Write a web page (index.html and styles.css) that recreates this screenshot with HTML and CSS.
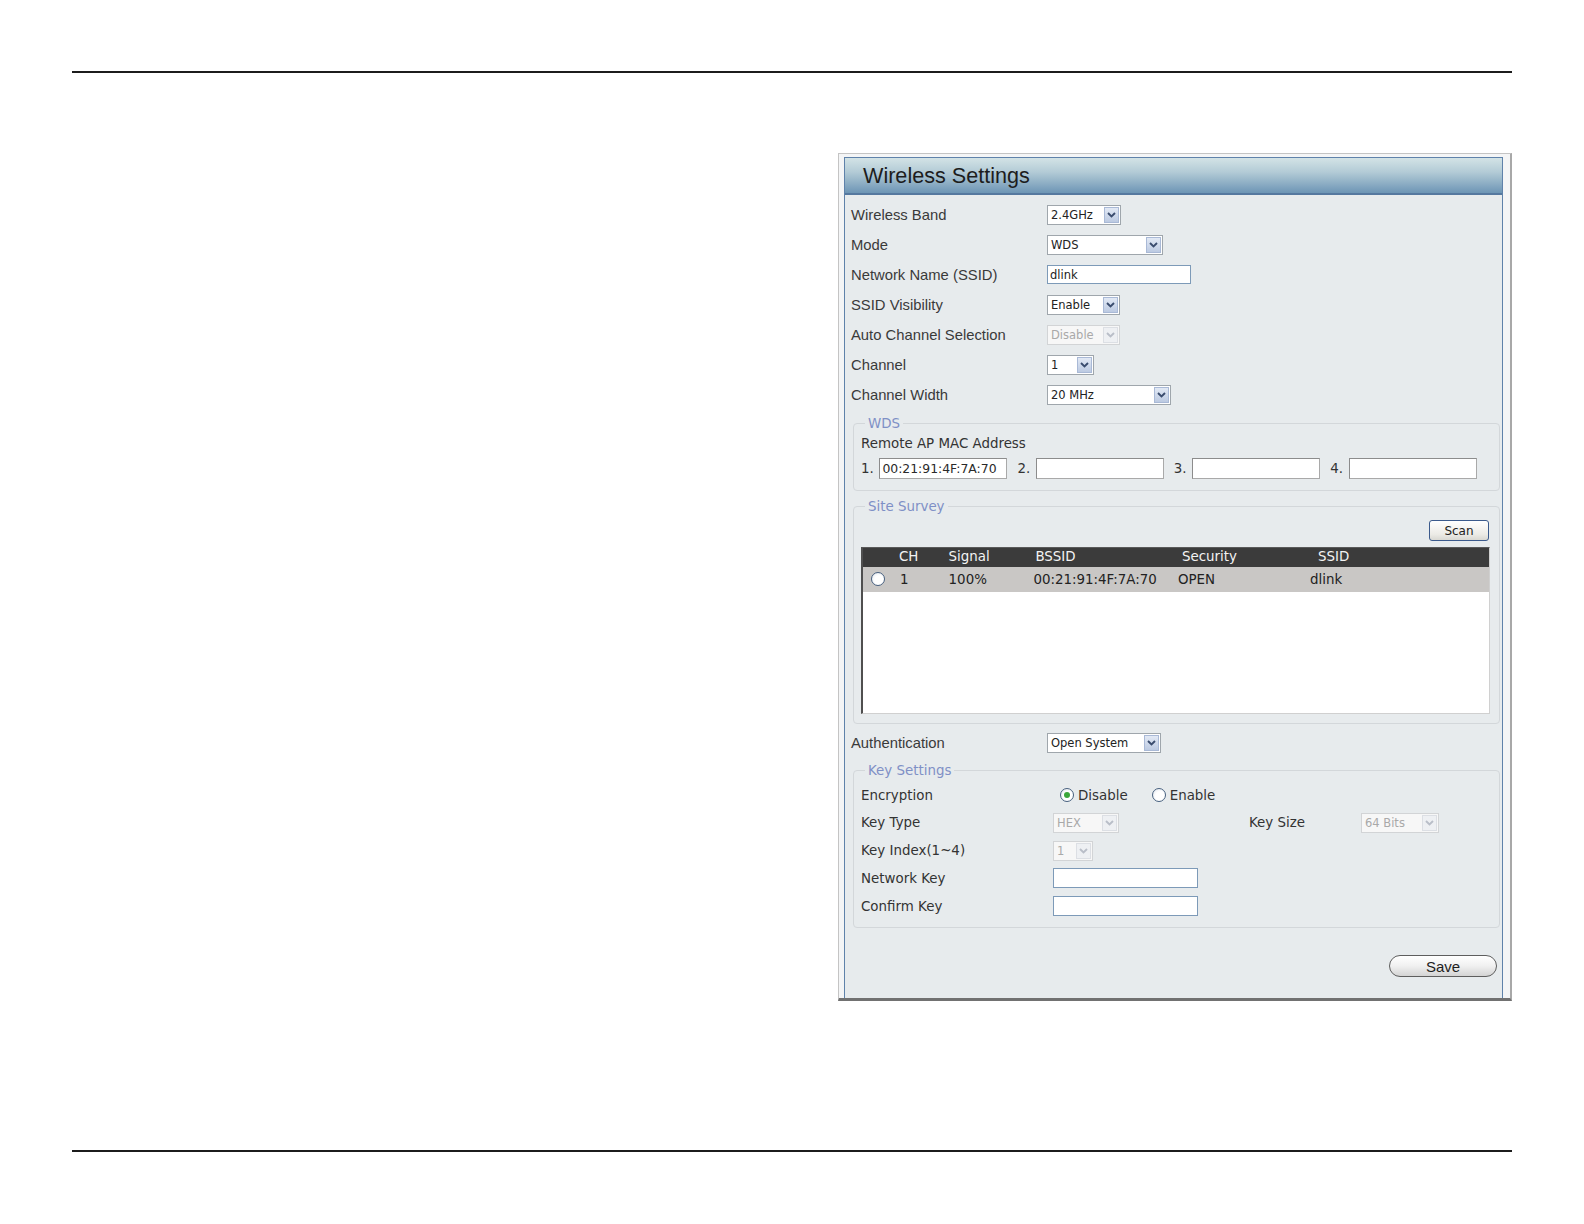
FILE: index.html
```html
<!DOCTYPE html>
<html lang="en">
<head>
<meta charset="utf-8">
<title>Wireless Settings</title>
<link rel="stylesheet" href="styles.css">
</head>
<body>
<div class="page">
  <div class="rule"></div>
  <div class="content">
    <div class="frame">
      <div class="panel">
        <div class="panel-head">Wireless Settings</div>
        <div class="panel-body">
          <div class="row"><div class="lbl">Wireless Band</div>
            <div class="sel w-band"><span class="sel-val">2.4GHz</span><span class="sel-btn"><svg viewBox="0 0 9 6"><path d="M1 1l3.5 3.5L8 1"/></svg></span></div></div>
          <div class="row"><div class="lbl">Mode</div>
            <div class="sel w-mode"><span class="sel-val">WDS</span><span class="sel-btn"><svg viewBox="0 0 9 6"><path d="M1 1l3.5 3.5L8 1"/></svg></span></div></div>
          <div class="row"><div class="lbl">Network Name (SSID)</div>
            <div class="txt w-ssid">dlink</div></div>
          <div class="row"><div class="lbl">SSID Visibility</div>
            <div class="sel w-vis"><span class="sel-val">Enable</span><span class="sel-btn"><svg viewBox="0 0 9 6"><path d="M1 1l3.5 3.5L8 1"/></svg></span></div></div>
          <div class="row"><div class="lbl">Auto Channel Selection</div>
            <div class="sel w-vis is-off"><span class="sel-val">Disable</span><span class="sel-btn"><svg viewBox="0 0 9 6"><path d="M1 1l3.5 3.5L8 1"/></svg></span></div></div>
          <div class="row"><div class="lbl">Channel</div>
            <div class="sel w-ch"><span class="sel-val">1</span><span class="sel-btn"><svg viewBox="0 0 9 6"><path d="M1 1l3.5 3.5L8 1"/></svg></span></div></div>
          <div class="row"><div class="lbl">Channel Width</div>
            <div class="sel w-cw"><span class="sel-val">20 MHz</span><span class="sel-btn"><svg viewBox="0 0 9 6"><path d="M1 1l3.5 3.5L8 1"/></svg></span></div></div>

          <fieldset class="fs fs-wds">
            <legend>WDS</legend>
            <div class="remote">Remote AP MAC Address</div>
            <div class="macs">
              <span class="mac-n">1.</span><div class="mac">00:21:91:4F:7A:70</div>
              <span class="mac-n">2.</span><div class="mac"></div>
              <span class="mac-n">3.</span><div class="mac"></div>
              <span class="mac-n">4.</span><div class="mac"></div>
            </div>
          </fieldset>

          <fieldset class="fs fs-survey">
            <legend>Site Survey</legend>
            <div class="scan-bar"><button class="scan" type="button">Scan</button></div>
            <div class="survey">
              <div class="sv-head">
                <span></span><span>CH</span><span>Signal</span><span class="th-b">BSSID</span><span class="th-s">Security</span><span class="th-i">SSID</span>
              </div>
              <div class="sv-row">
                <span class="sv-radio"><span class="radio"></span></span><span>1</span><span>100%</span><span>00:21:91:4F:7A:70</span><span>OPEN</span><span>dlink</span>
              </div>
            </div>
          </fieldset>

          <div class="row row-auth"><div class="lbl">Authentication</div>
            <div class="sel w-auth"><span class="sel-val">Open System</span><span class="sel-btn"><svg viewBox="0 0 9 6"><path d="M1 1l3.5 3.5L8 1"/></svg></span></div></div>

          <fieldset class="fs fs-key">
            <legend>Key Settings</legend>
            <div class="krow"><div class="klbl">Encryption</div>
              <span class="radio on r-dis"></span><span class="rtxt">Disable</span>
              <span class="radio r-en"></span><span class="rtxt">Enable</span>
            </div>
            <div class="krow"><div class="klbl">Key Type</div>
              <div class="sel w-kt is-off"><span class="sel-val">HEX</span><span class="sel-btn"><svg viewBox="0 0 9 6"><path d="M1 1l3.5 3.5L8 1"/></svg></span></div>
              <div class="ks-lbl">Key Size</div>
              <div class="sel w-ks is-off"><span class="sel-val">64 Bits</span><span class="sel-btn"><svg viewBox="0 0 9 6"><path d="M1 1l3.5 3.5L8 1"/></svg></span></div>
            </div>
            <div class="krow"><div class="klbl">Key Index(1~4)</div>
              <div class="sel w-ki is-off"><span class="sel-val">1</span><span class="sel-btn"><svg viewBox="0 0 9 6"><path d="M1 1l3.5 3.5L8 1"/></svg></span></div>
            </div>
            <div class="krow"><div class="klbl">Network Key</div><div class="txt w-key"></div></div>
            <div class="krow"><div class="klbl">Confirm Key</div><div class="txt w-key"></div></div>
          </fieldset>

          <div class="actions"><button class="save" type="button">Save</button></div>
        </div>
      </div>
    </div>
  </div>
  <div class="rule rule-bottom"></div>
</div>
</body>
</html>
```

FILE: styles.css
```css
html, body {
  margin: 0;
  padding: 0;
  background: #ffffff;
}

.page {
  width: 1440px;
  padding: 71px 72px 0 72px;
}

.rule {
  border-top: 2px solid #1c1c1c;
}

.rule-bottom {
  margin-top: 149px;
}

.content {
  display: flex;
  justify-content: flex-end;
  margin-top: 80px;
}

.frame {
  width: 674px;
  height: 848px;
  box-sizing: border-box;
  border: 1px solid #c4c4c4;
  border-right: 2px solid #a8a8a8;
  border-bottom: 3px solid #717171;
  padding: 3px 7px 0 5px;
  background: #f4f5f6;
}

.panel {
  height: 100%;
  box-sizing: border-box;
  border: 1px solid #5f82aa;
  border-bottom: none;
  background: #e7ebed;
  display: flex;
  flex-direction: column;
}

.panel-head {
  height: 35px;
  border-bottom: 2px solid #55789f;
  background: linear-gradient(#d3e3e6 0%, #b3cbd6 40%, #6d95b5 100%);
  display: flex;
  align-items: center;
  padding-left: 18px;
  font: 21.6px "Liberation Sans", Arial, sans-serif;
  color: #1d1d1d;
}

.panel-body {
  padding-top: 4.5px;
  display: flex;
  flex-direction: column;
}

.row {
  height: 30.15px;
  display: flex;
  align-items: center;
  padding-left: 6px;
}

.lbl {
  width: 196px;
  font: 14.8px "Liberation Sans", Arial, sans-serif;
  color: #3a3a3a;
}

/* select look-alike */
.sel {
  height: 20px;
  box-sizing: border-box;
  display: flex;
  border: 1px solid #9fa6ac;
  background: #ffffff;
  font: 11.5px "DejaVu Sans", sans-serif;
  color: #222;
}

.sel-val {
  flex: 1;
  display: flex;
  align-items: center;
  padding-left: 3px;
  overflow: hidden;
  white-space: nowrap;
}

.sel-btn {
  width: 15px;
  margin: 1px;
  box-sizing: border-box;
  border: 1px solid #a9b9d6;
  background: linear-gradient(#e2e9f5, #bccae2);
  display: flex;
  align-items: center;
  justify-content: center;
}

.sel-btn svg {
  width: 9px;
  height: 6px;
  fill: none;
  stroke: #3a4c6e;
  stroke-width: 1.9;
}

.sel.is-off {
  border-color: #d2d4d6;
  background: #f7f7f7;
  color: #a9a9a9;
}

.sel.is-off .sel-btn {
  border-color: #dcdfe4;
  background: #eef0f3;
}

.sel.is-off .sel-btn svg {
  stroke: #b9bec8;
}

.w-band { width: 74px; }
.w-mode { width: 116px; }
.w-vis { width: 73px; }
.w-ch { width: 47px; }
.w-cw { width: 124px; }
.w-auth { width: 114px; }
.w-kt { width: 66px; }
.w-ki { width: 40px; }
.w-ks { width: 78px; }

.txt {
  height: 19px;
  box-sizing: border-box;
  border: 1px solid #7d9ab8;
  background: #fff;
  padding-left: 2px;
  display: flex;
  align-items: center;
  font: 11.5px "DejaVu Sans", sans-serif;
  color: #222;
}

.w-ssid { width: 144px; }
.w-key { width: 145px; height: 20px; }

/* fieldsets */
.fs {
  margin: 0 2px 0 8px;
  padding: 0 9px 0 7px;
  border: 1px solid #d3d7da;
  border-radius: 4px;
  min-width: 0;
  font: 13.4px/17px "DejaVu Sans", sans-serif;
  color: #333;
}

.fs legend {
  font: 13.4px/17px "DejaVu Sans", sans-serif;
  color: #7f90c6;
  padding: 0 3px;
  margin-left: 4px;
}

.fs-wds {
  margin-top: 5px;
  padding-top: 2.5px;
  padding-bottom: 9.5px;
}

.remote {
  height: 17px;
}

.macs {
  margin-top: 4.7px;
  height: 24px;
  display: flex;
  align-items: center;
}

.mac-n {
  width: 18.4px;
}

.mac {
  width: 128px;
  height: 21px;
  box-sizing: border-box;
  margin-right: 10px;
  border: 1px solid #a9a9a9;
  border-top-color: #8c8c8c;
  border-left-color: #8c8c8c;
  background: #fff;
  padding-left: 2px;
  display: flex;
  align-items: center;
  font: 12.4px "DejaVu Sans", sans-serif;
  color: #2a2a2a;
}

.fs-survey {
  margin-top: 6.5px;
  padding-bottom: 9px;
}

.scan-bar {
  margin-top: 5.5px;
  display: flex;
  justify-content: flex-end;
  padding-right: 1px;
}

.scan {
  width: 60px;
  height: 21px;
  box-sizing: border-box;
  border: 1px solid #3b5a8c;
  border-radius: 3px;
  background: linear-gradient(#ffffff, #ecebe6 70%, #d9d8d2);
  font: 12px "DejaVu Sans", sans-serif;
  color: #222;
  padding: 0;
  margin: 0;
}

.survey {
  margin-top: 5.5px;
  height: 167px;
  box-sizing: border-box;
  border: 1px solid #d0d0d0;
  border-top-color: #5a5a5a;
  border-left: 2px solid #4f4f4f;
  background: #fff;
}

.sv-head,
.sv-row {
  display: grid;
  grid-template-columns: 37px 48.6px 84.8px 144.6px 132px 1fr;
}

.sv-head {
  height: 19px;
  background: #3b3b3b;
  color: #f3f3f3;
  line-height: 18px;
}

.sv-head span:nth-child(2) { margin-left: -1px; }
.th-b { padding-left: 2px; }
.th-s { padding-left: 4px; }
.th-i { padding-left: 8px; }

.sv-row {
  height: 25px;
  align-items: center;
  background: #c9c7c5;
  color: #222;
}

.sv-radio {
  display: flex;
  padding-left: 8px;
}

.radio {
  width: 14px;
  height: 14px;
  box-sizing: border-box;
  border: 1px solid #47607f;
  border-radius: 50%;
  background: radial-gradient(circle at 60% 60%, #ffffff 45%, #dce2ea 100%);
  display: inline-flex;
  align-items: center;
  justify-content: center;
}

.radio.on::after {
  content: "";
  width: 6px;
  height: 6px;
  border-radius: 50%;
  background: #3ba63b;
}

.row-auth {
  margin-top: 4.5px;
}

.fs-key {
  margin-top: 4px;
  padding-top: 1.8px;
  padding-bottom: 6.5px;
}

.krow {
  height: 27.8px;
  display: flex;
  align-items: center;
}

.klbl {
  width: 192px;
}

.r-dis { margin-left: 7px; }
.r-en { margin-left: 24px; }
.rtxt { margin-left: 4px; }

.ks-lbl {
  margin-left: 130px;
  width: 112px;
}

.actions {
  display: flex;
  justify-content: flex-end;
  margin-top: 27.5px;
  padding-right: 5px;
}

.save {
  width: 108px;
  height: 22px;
  box-sizing: border-box;
  border: 1px solid #5e5e5e;
  border-radius: 11px;
  background: linear-gradient(#ffffff, #f0f0f0 50%, #d4d4d4);
  font: 15px "Liberation Sans", Arial, sans-serif;
  color: #1e1e1e;
  padding: 0;
  margin: 0;
}
```
